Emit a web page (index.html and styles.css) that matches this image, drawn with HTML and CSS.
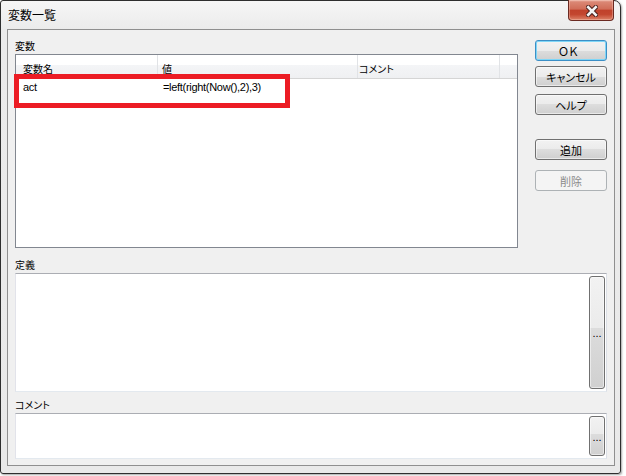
FILE: index.html
```html
<!DOCTYPE html>
<html lang="ja">
<head>
<meta charset="utf-8">
<title>変数一覧</title>
<link rel="stylesheet" href="styles.css">
</head>
<body>
<div class="window">
  <div class="titlebar">
    <span class="title">変数一覧</span>
    <div class="close">
      <svg width="12" height="12" viewBox="0 0 12 12">
        <path d="M2.2 2.2 L9.8 9.8 M9.8 2.2 L2.2 9.8" stroke="#4a1f1a" stroke-width="4.6" stroke-linecap="square" fill="none"/>
        <path d="M2.2 2.2 L9.8 9.8 M9.8 2.2 L2.2 9.8" stroke="#f4f4f4" stroke-width="2.6" stroke-linecap="square" fill="none"/>
      </svg>
    </div>
  </div>
  <div class="client">
    <div class="top">
      <div class="vars">
        <div class="label">変数</div>
        <div class="listview">
          <div class="lv-header">
            <div class="hcol c1">変数名</div>
            <div class="hcol c2">値</div>
            <div class="hcol c3">コメント</div>
            <div class="hcol c4"></div>
          </div>
          <div class="lv-row">
            <div class="cell c1">act</div>
            <div class="cell c2">=left(right(Now(),2),3)</div>
            <div class="cell c3"></div>
          </div>
          <div class="mark"></div>
        </div>
      </div>
      <div class="buttons">
        <div class="btn default ok">OK</div>
        <div class="btn b-cancel">キャンセル</div>
        <div class="btn b-help">ヘルプ</div>
        <div class="btn b-add">追加</div>
        <div class="btn b-del disabled">削除</div>
      </div>
    </div>
    <div class="label sec-def">定義</div>
    <div class="textbox def"><div class="dots">...</div></div>
    <div class="label sec-cmt">コメント</div>
    <div class="textbox cmt"><div class="dots">...</div></div>
  </div>
</div>
</body>
</html>
```

FILE: styles.css
```css
* { box-sizing: border-box; }
html, body { margin: 0; padding: 0; }
body {
  width: 626px;
  height: 476px;
  overflow: hidden;
  background: #ffffff;
  font-family: "Liberation Sans", "Noto Sans CJK JP", sans-serif;
  font-size: 10px;
  color: #000;
}
.window {
  width: 621px;
  height: 474px;
  border: 1px solid #2e2e2e;
  border-radius: 3px 7px 3px 3px;
  background: linear-gradient(#f6f6f6, #ebebeb 29px, #e9e9e9);
  display: flex;
  flex-direction: column;
  box-shadow: 1px 1px 2px rgba(0,0,0,.35);
}
.titlebar {
  height: 28px;
  display: flex;
  align-items: flex-start;
  padding-left: 7px;
}
.title {
  font-family: "Noto Sans CJK JP", sans-serif;
  font-size: 12px;
  line-height: 16px;
  margin-top: 6px;
}
.close {
  margin-left: auto;
  margin-right: 6px;
  margin-top: -1px;
  width: 46px;
  height: 21px;
  border: 1px solid #6b2a22;
  border-top: none;
  border-radius: 0 0 4px 4px;
  background: linear-gradient(#e8ab9c 0%, #da8572 12%, #d06c57 46%, #c0412b 50%, #c3462f 72%, #dc8268 100%);
  box-shadow: inset 0 0 0 1px rgba(255,220,210,.35);
  display: flex;
  align-items: center;
  justify-content: center;
  padding: 1px 0 0 2px;
}
.client {
  flex: 1;
  margin: 0 5px 7px 6px;
  border: 1px solid #8f8f8f;
  background: #f0f0f0;
  padding: 8px 7px 6px;
  display: flex;
  flex-direction: column;
}
.top {
  display: flex;
  gap: 17px;
  height: 210px;
}
.vars {
  width: 503px;
  display: flex;
  flex-direction: column;
}
.label {
  height: 16px;
  line-height: 16px;
  font-family: "Noto Sans CJK JP", sans-serif;
  font-size: 10px;
  font-feature-settings: "palt";
  flex: none;
}
.sec-def { margin-top: 9px; }
.sec-cmt { margin-top: 5px; }
.listview {
  flex: 1;
  border: 1px solid #828790;
  background: #fff;
  position: relative;
}
.lv-header {
  display: flex;
  height: 24px;
  border-bottom: 1px solid #d5d5d5;
  background: linear-gradient(#ffffff 0%, #ffffff 42%, #f4f5f7 42%, #eff0f2 100%);
}
.hcol {
  border-right: 1px solid #e1e3e6;
  display: flex;
  align-items: center;
  padding-top: 3px;
  font-family: "Noto Sans CJK JP", sans-serif;
  font-size: 10px;
  font-feature-settings: "palt";
}
.c1 { width: 142px; padding-left: 7px; }
.c2 { width: 200px; padding-left: 4px; }
.c3 { width: 142px; padding-left: 1px; }
.c4 { flex: 1; border-right: none; }
.lv-row {
  display: flex;
  height: 17px;
  line-height: 17px;
  font-size: 11px;
  letter-spacing: -0.3px;
}
.cell.c2 { padding-left: 5px; }
.mark {
  position: absolute;
  left: -2px;
  top: 19px;
  width: 276px;
  height: 34px;
  border: 5px solid #ec1c24;
}
.buttons {
  width: 72px;
  display: flex;
  flex-direction: column;
  padding-top: 2px;
}
.btn {
  height: 21px;
  flex: none;
  border: 1px solid #707070;
  border-radius: 3px;
  background: linear-gradient(#f2f2f2 0%, #ebebeb 50%, #dddddd 50%, #cfcfcf 100%);
  box-shadow: inset 0 0 0 1px rgba(255,255,255,.55);
  display: flex;
  align-items: center;
  justify-content: center;
  font-family: "Noto Sans CJK JP", sans-serif;
  font-size: 11px;
  font-feature-settings: "palt";
  padding-top: 1px;
}
.btn.ok {
  font-feature-settings: "fwid";
  font-size: 11px;
  letter-spacing: -1px;
  padding-right: 6px;
}
.btn.default {
  border-color: #3c8fc6;
  box-shadow: inset 0 0 0 1px #7fd6f7;
}
.b-cancel { margin-top: 5px; }
.b-help { margin-top: 7px; }
.b-add { margin-top: 24px; }
.b-del { margin-top: 10px; }
.btn.disabled {
  border-color: #adb2b5;
  background: #f4f4f4;
  box-shadow: none;
  color: #8a8a8a;
}
.textbox {
  flex: none;
  background: #fff;
  border: 1px solid;
  border-color: #abadb3 #dbdfe6 #e3e9ef #e2e3ea;
  display: flex;
  justify-content: flex-end;
  padding: 2px 1px 2px 0;
}
.def { height: 119px; }
.cmt { height: 46px; }
.dots {
  width: 16px;
  border: 1px solid #707070;
  border-radius: 3px;
  background: linear-gradient(#f2f2f2 0%, #ebebeb 46%, #dcdcdc 46%, #d0d0d0 100%);
  box-shadow: inset 0 0 0 1px rgba(255,255,255,.5);
  display: flex;
  align-items: center;
  justify-content: center;
  font-size: 11px;
  line-height: 11px;
  padding-top: 2px;
}
```
